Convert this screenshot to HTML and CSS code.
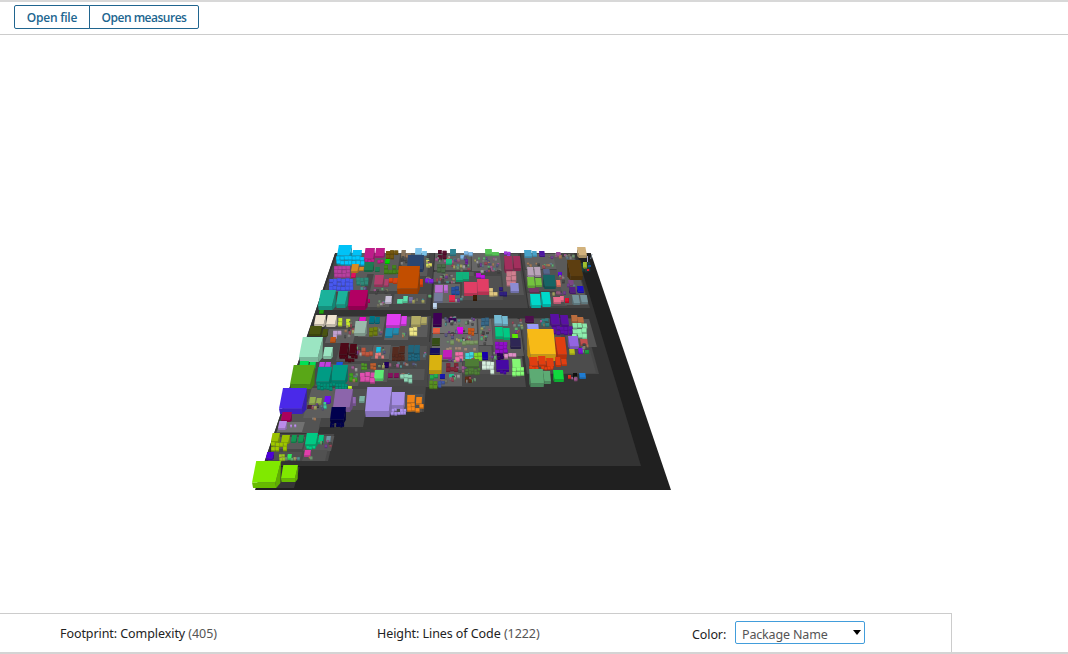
FILE: index.html
```html
<!DOCTYPE html>
<html lang="en">
<head>
<meta charset="utf-8">
<title>Code City</title>
<link rel="stylesheet" href="styles.css">
</head>
<body>
<div class="app">
  <header class="toolbar">
    <div class="button-group">
      <button class="button button-file">Open file</button>
      <button class="button button-measures">Open measures</button>
    </div>
  </header>
  <main class="stage">
    <svg class="city" id="city" viewBox="0 35 1068 578" aria-label="Code city"></svg>
  </main>
  <footer class="legend">
    <div class="metric metric-footprint">Footprint: Complexity <span class="count">(405)</span></div>
    <div class="metric metric-height">Height: Lines of Code <span class="count">(1222)</span></div>
    <div class="color-picker">
      <span class="color-label">Color:</span>
      <div class="select"><span>Package Name</span><svg class="arrow" viewBox="0 0 8 5"><path d="M0 0h8L4 5z"/></svg></div>
    </div>
  </footer>
</div>
<script src="city.js"></script>
</body>
</html>
```
FILE: styles.css
```css
* { box-sizing: border-box; }
body { margin: 0; background: #fff; font-family: "Noto Sans", "Open Sans", sans-serif; font-size: 12px; color: #222; }
.app { display: flex; flex-direction: column; height: 654px; overflow: hidden; }
.toolbar { height: 35px; flex: none; padding: 3px 14px 0; border-top: 2px solid #d8d8d8; border-bottom: 1px solid #ccc; }
.button-group { display: flex; }
.button { height: 24px; padding: 1px 0 0; border: 1px solid #20658f; background: #fff; color: #20658f; font-family: "Open Sans", sans-serif; font-size: 12px; font-weight: 600; line-height: 20px; white-space: nowrap; }
.button-file { width: 76px; border-radius: 2px 0 0 2px; letter-spacing: -0.25px; }
.button-measures { width: 110px; margin-left: -1px; border-radius: 0 2px 2px 0; letter-spacing: -0.5px; }
.stage { height: 578px; flex: none; }
.city { display: block; width: 1068px; height: 578px; }
.legend { display: flex; width: 952px; height: 40px; flex: none; border-top: 1px solid #ccc; border-right: 1px solid #ccc; padding-left: 60px; }
.app::after { content: ""; height: 2px; margin-top: -1px; flex: none; background: #d4d4d4; }
.metric { padding-top: 11px; font-size: 12.5px; line-height: 18px; white-space: nowrap; }
.metric-footprint { width: 317px; letter-spacing: -0.07px; }
.metric-height { width: 315px; letter-spacing: -0.07px; }
.count { color: #555; }
.color-picker { display: flex; align-items: flex-start; padding-top: 7px; }
.color-label { width: 43px; padding-top: 5px; font-size: 12.5px; line-height: 18px; letter-spacing: -0.1px; }
.select { display: flex; align-items: center; justify-content: space-between; width: 130px; height: 23px; padding: 4px 3px 0 6px; border: 1px solid #429ddb; border-radius: 2px; color: #555; font-size: 12.5px; letter-spacing: -0.16px; white-space: nowrap; }
.arrow { width: 8px; height: 5px; margin-bottom: 4px; fill: #000; }
```
FILE: city.js
```js
const NS = "http://www.w3.org/2000/svg";
const city = document.getElementById("city");
const VX = 463, VY = -125;
let seed = 11;
const rnd = () => (seed = (seed * 16807) % 2147483647) / 2147483647;

function poly(points, fill) {
  const p = document.createElementNS(NS, "polygon");
  p.setAttribute("points", points.map(q => q.map(n => n.toFixed(1)).join(",")).join(" "));
  p.setAttribute("fill", fill);
  city.appendChild(p);
}
function shade(hex, f) {
  const n = parseInt(hex, 16);
  return `rgb(${[n >> 16, (n >> 8) & 255, n & 255].map(v => Math.round(v * f)).join(",")})`;
}
// Ground plates: x positions are given on the near edge and recede to the vanishing point.
function plate(x1, x2, top, bottom, fill) {
  const t = (top - VY) / (bottom - VY);
  poly([[x1, bottom], [x2, bottom], [VX + (x2 - VX) * t, top], [VX + (x1 - VX) * t, top]], fill);
}
[
  [255, 671, 253, 490, "#202020"], [263, 641, 253, 466, "#333"],
  [256, 294, 467, 488, "#353535"],
  [318, 430, 253, 310, "#464646"], [432, 528, 253, 308, "#464646"], [529, 590, 253, 308, "#444"],
  [320, 429, 316, 343, "#484848"], [306, 427, 342, 387, "#484848"], [427, 526, 318, 387, "#484848"], [527, 599, 318, 374, "#464646"],
  [283, 424, 386, 412, "#464646"], [276, 318, 402, 433, "#535353"], [319, 363, 394, 427, "#464646"],
  [268, 328, 434, 461, "#484848"],
  [329, 363, 253, 292, "#5b5b5b"], [365, 397, 253, 274, "#5b5b5b"], [370, 400, 274, 291, "#5b5b5b"],
  [366, 389, 294, 307, "#5a5a5a"], [393, 426, 294, 304, "#555"], [400, 427, 253, 276, "#595959"],
  [434, 471, 253, 270, "#616161"], [472, 502, 253, 271, "#666"], [433, 474, 272, 282, "#5c5c5c"],
  [433, 460, 284, 303, "#646464"], [462, 503, 276, 300, "#515151"], [504, 524, 254, 295, "#555"],
  [526, 563, 254, 269, "#626262"], [528, 565, 270, 291, "#535353"], [529, 567, 293, 306, "#505050"], [565, 588, 257, 305, "#5a5a5a"],
  [331, 357, 317, 326, "#606060"], [358, 382, 317, 337, "#606060"], [384, 408, 317, 340, "#606060"], [409, 427, 317, 337, "#5b5b5b"],
  [325, 353, 329, 343, "#606060"], [336, 370, 345, 361, "#555"], [371, 389, 345, 359, "#606060"], [389, 426, 346, 360, "#535353"],
  [315, 358, 364, 386, "#575757"], [359, 387, 369, 382, "#585858"], [388, 424, 369, 380, "#555"],
  [432, 477, 319, 333, "#727272"], [431, 479, 334, 360, "#696969"], [479, 493, 319, 345, "#696969"], [480, 493, 346, 374, "#5b5b5b"],
  [494, 524, 319, 356, "#5a5a5a"], [494, 524, 358, 375, "#5b5b5b"], [429, 462, 362, 386, "#626262"], [463, 493, 362, 374, "#505050"],
  [528, 568, 319, 370, "#535353"], [568, 597, 319, 347, "#535353"], [527, 596, 350, 373, "#4c4c4c"],
  [303, 333, 388, 418, "#5d5d5d"], [277, 302, 422, 432, "#717171"], [334, 364, 389, 410, "#505050"], [382, 422, 394, 412, "#515151"],
  [272, 302, 437, 449, "#5a5a5a"], [303, 331, 436, 451, "#575757"], [268, 300, 452, 460, "#505050"], [302, 325, 450, 461, "#515151"]
].forEach(p => plate(...p));

const items = [];
const box = (c, x, y, w, h) => items.push([c, x, y, w, h]);
const B = `00c8ff 337,245,15,13 352,250,10,7
c41e8e 364,248,11,13 375,248,10,10
e09020 351,264,8,9 359,267,5,4
1d8055 364,262,10,10 375,267,5,5
00e000 385,259,5,5
2c4875 407,255,17,17
8c7860 401,250,5,8 406,253,5,5
80c8f0 415,248,7,8 422,251,5,5
c85000 397,266,23,28
e04510 389,278,4,5 393,278,5,6 420,279,3,8
b84070 374,275,10,12 384,279,5,8
1cb8a0 318,290,18,20 336,291,12,17
b80066 348,290,20,20 368,299,2,4
d0c8e0 385,296,7,8
60e8b0 397,299,6,5 403,296,5,7
7870a0 409,297,4,6
e81060 351,273,5,5
308898 450,249,6,7
58c858 485,249,7,7 492,252,7,4
18c888 446,259,6,6
10b880 456,272,7,10 463,272,6,9
c010e0 476,273,5,5 481,275,4,4
c070d8 435,285,8,9 444,285,4,8
7880a0 434,293,9,10
e84068 464,282,13,14 477,279,12,16
f02850 449,295,6,7
402008 473,295,4,6
9090d8 510,283,9,10
a83060 504,256,9,17 513,256,8,15
c0d8f0 433,303,4,6
48a8d0 524,250,8,8 532,251,5,6
5018a8 539,251,6,6
a048a0 556,252,5,5
d8b880 577,247,10,11
604010 567,260,16,20
c0a8c0 527,267,7,10 534,267,7,10
78c840 527,277,8,11 535,278,7,9
186868 543,275,13,14
586890 543,269,7,6
6010e0 558,272,4,4
f07868 556,280,5,7
783868 529,288,10,5
00e0d0 530,294,11,14 541,292,10,15
f07090 553,297,8,7 560,296,4,6
e01030 565,298,4,5
7898a0 572,295,8,10 580,295,8,9
582088 569,287,7,7
2010d0 577,286,7,7
804888 568,280,6,6
a0c030 583,262,4,7
f8ecd8 314,315,12,12 326,315,11,12
4c5810 309,326,13,10 322,329,6,8
f010d0 359,317,7,6
007888 369,316,6,8 375,317,5,7
e840f8 386,314,15,14 401,316,6,10
b8b068 411,316,10,11 421,317,6,8
a0c0b0 354,321,13,15
2090b8 385,328,8,10 393,328,6,7
c85818 330,337,6,6
a0ecc8 299,337,24,25 323,347,10,12
500818 339,343,10,14 349,344,8,12
10c8e8 376,347,5,6
582c20 392,347,7,10 399,346,6,8
206880 408,345,6,9 414,345,6,10
00e858 299,361,10,8 309,362,7,7
c840e8 319,362,6,6 325,362,6,6
5cac18 290,365,25,24
00a088 316,367,16,18 331,365,17,19
1858e8 336,362,7,5
60f078 374,370,10,11
881060 388,373,5,5 394,373,5,5
200060 384,362,5,6
c0f030 348,386,4,3
400058 433,313,9,14
f06040 433,328,7,6
e800f8 457,327,6,7
78c0d8 494,315,8,11 502,316,6,10
00d088 495,327,8,12 503,328,7,12
302858 510,338,11,11
60f000 512,334,6,5
385018 432,338,8,8
181060 430,348,10,7
e0b810 429,355,13,19
c820c0 443,350,9,9
1800b0 482,352,6,8
508038 465,359,14,9
4808a8 496,360,13,12
88ff78 512,359,9,11
20c890 449,374,5,5
1818b0 440,374,5,5
500f50 525,316,9,7
a0a0ff 527,324,12,10
5c10a8 550,314,10,13 560,315,9,12
c07040 571,315,7,8 577,317,7,7
ffc018 527,329,29,32
e84010 555,337,12,22 529,357,9,11 538,356,8,11 546,358,8,10 555,357,6,10 561,359,6,7
9868e8 568,336,11,13
c85050 580,339,8,7
c0c818 569,349,6,6
8010e0 578,348,5,6
20a040 585,350,4,4
60b078 529,369,15,18 543,371,8,13
10e040 553,370,11,12
101010 573,373,4,5
e03020 568,375,3,4
2080d8 579,373,7,6
4c2af0 279,388,28,26
b00060 281,412,11,10
c090f0 278,421,9,9
98b050 309,397,7,8 316,398,6,7
7010f8 324,396,7,8
9068b0 333,389,20,23 352,397,4,9
000050 330,407,16,16
80b8a8 359,396,6,7
ac92ee 365,387,27,30 391,392,14,17
f88818 407,395,8,9 416,397,6,8
a0c800 271,433,9,10 281,435,9,9
10a058 291,435,6,8 298,435,6,8
00d088 305,433,13,14 318,435,6,9
7898a8 326,436,5,6
5000e0 266,452,8,8
30f060 287,454,5,6
e840b0 304,450,7,7
84f000 252,461,29,27 281,465,17,17
502038 307,405,5,4
20a810 319,310,5,4`;
B.split("\n").forEach(line => {
  const [c, ...r] = line.split(" ");
  r.forEach(s => box(c, ...s.split(",").map(Number)));
});

// Packages holding many small classes: colour, x, y, width, height, building size, fill ratio.
[
  ["00c8ff", 336, 256, 26, 9, 4, 1], ["c41e8e", 365, 259, 17, 4, 3, .8], ["b840a0", 334, 265, 17, 12, 4, 1],
  ["74580f", 386, 250, 13, 8, 4, .8], ["45851e", 384, 265, 14, 9, 4, .9], ["4858f0", 329, 278, 25, 12, 4, 1],
  ["308878", 356, 277, 11, 7, 4, .8], ["e0e060", 426, 260, 6, 5, 3, .7], ["8020e0", 425, 278, 6, 5, 4, .8],
  ["581030", 438, 250, 9, 7, 4, 1], ["80b8e8", 460, 251, 11, 7, 4, .7], ["4c6a48", 437, 264, 9, 8, 4, .9],
  ["7028a0", 462, 259, 8, 6, 3, .6], ["2850a0", 451, 286, 7, 8, 4, .8], ["e0c880", 489, 287, 7, 6, 4, .8],
  ["302080", 499, 287, 8, 7, 4, .8], ["d08090", 506, 271, 11, 12, 5, .9], ["a038e0", 504, 251, 7, 5, 3, .8],
  ["c8e830", 338, 318, 10, 8, 4, .8], ["c0a0d0", 333, 330, 8, 6, 4, .8], ["708010", 369, 327, 7, 6, 4, .7],
  ["f0e888", 409, 327, 9, 8, 4, .9], ["c05840", 361, 347, 10, 9, 4, .8], ["e08080", 375, 352, 8, 6, 3, .8],
  ["500818", 339, 355, 17, 5, 3, .8], ["582c20", 392, 354, 13, 6, 3, .9], ["206880", 408, 354, 11, 5, 3, .8],
  ["009078", 317, 383, 30, 5, 3, .9], ["e050b0", 360, 372, 12, 9, 5, .8], ["509828", 361, 363, 7, 6, 3, .8],
  ["c06030", 370, 363, 6, 6, 3, .8], ["40a020", 349, 373, 8, 8, 4, .8], ["90d8b8", 400, 374, 10, 6, 4, .6],
  ["380858", 448, 318, 8, 5, 4, .9], ["386888", 481, 317, 7, 7, 4, .9], ["d05818", 468, 328, 6, 5, 3, .9],
  ["7c9a64", 442, 340, 36, 5, 4, .5], ["a08878", 443, 347, 35, 4, 3, .4], ["9010c8", 495, 341, 13, 11, 4, .95],
  ["f070a8", 455, 352, 8, 8, 4, .9], ["40d8e0", 465, 352, 6, 7, 4, .9], ["80d828", 474, 352, 6, 6, 4, .8],
  ["802838", 446, 363, 10, 8, 4, .75], ["508038", 465, 368, 14, 6, 3, .9], ["d8f0e0", 482, 361, 10, 12, 4, .85],
  ["4808a8", 497, 370, 10, 4, 3, .9], ["88ff78", 512, 367, 12, 6, 4, .9], ["300060", 497, 353, 6, 5, 3, .7],
  ["e090c8", 504, 353, 16, 5, 4, .5], ["603018", 465, 376, 5, 5, 3, .9], ["589020", 429, 380, 9, 6, 4, .7],
  ["4058a8", 438, 381, 6, 5, 3, .7], ["20b050", 430, 374, 7, 5, 4, .8], ["308080", 541, 318, 8, 6, 4, .8],
  ["5c10a8", 552, 326, 18, 6, 4, .9], ["90f0b0", 572, 323, 13, 13, 5, 1], ["e84010", 529, 366, 23, 4, 3, .9],
  ["ac92ee", 391, 408, 14, 6, 3, .8], ["f88818", 407, 403, 14, 8, 4, .8], ["000050", 330, 422, 15, 4, 2, .9],
  ["a0c800", 271, 442, 16, 8, 4, .85], ["00d088", 306, 446, 13, 4, 3, .8], ["9cc820", 279, 454, 6, 6, 3, .8],
  ["c090f0", 290, 424, 7, 3, 2, .8], ["40c8a0", 323, 402, 5, 5, 3, .7], ["204040", 581, 262, 8, 8, 3, .8]
].forEach(([c, x, y, w, h, s, fill]) => {
  for (let j = 0; j < h - 1; j += s)
    for (let i = 0; i < w - 1; i += s)
      if (rnd() < fill) box(c, x + i + rnd() * .6, y + j + rnd() * 1.2, s - .4 + rnd() * .7, s + rnd() * .8);
});

// Mixed neighbourhoods of tiny classes.
const mix = "707060 709070 906078 585880 a0a0a0 a07858 60a870 704090 984858 607888 a0a060 a05890 505050 509090 808080 484848".split(" ");
[
  [357, 281, 10, 12], [373, 288, 18, 5], [376, 298, 12, 9], [409, 298, 17, 5], [399, 255, 10, 9], [426, 253, 5, 45],
  [434, 256, 32, 7], [448, 264, 22, 7], [435, 273, 20, 11], [473, 257, 27, 12], [474, 268, 27, 5], [453, 295, 12, 6],
  [526, 262, 28, 6], [558, 274, 8, 8], [546, 252, 15, 7], [562, 253, 14, 6], [552, 290, 14, 5], [567, 282, 13, 5],
  [343, 321, 13, 16], [376, 326, 8, 9], [398, 331, 9, 6], [355, 345, 8, 12], [382, 347, 7, 6], [423, 350, 4, 8],
  [347, 364, 10, 6], [376, 362, 11, 6], [388, 362, 31, 6], [349, 373, 10, 8], [400, 373, 13, 6],
  [444, 316, 33, 10], [444, 328, 22, 8], [442, 335, 37, 8], [480, 325, 12, 21], [445, 357, 30, 5],
  [456, 365, 10, 8], [440, 374, 21, 9], [465, 376, 12, 6], [511, 319, 12, 14], [489, 350, 7, 8],
  [540, 316, 9, 10], [567, 374, 10, 6], [581, 340, 8, 12], [309, 403, 17, 7], [310, 415, 6, 5],
  [280, 456, 20, 4], [320, 440, 12, 7], [306, 456, 7, 3]
].forEach(([x, y, w, h]) => {
  for (let n = 0; n < w * h / 15; n++)
    box(mix[Math.floor(rnd() * mix.length)], x + rnd() * (w - 2), y + rnd() * (h - 2), 1.6 + rnd() * 1.5, 2 + rnd() * 1.8);
});

items.sort((a, b) => (a[2] + a[4]) - (b[2] + b[4]));
items.forEach(([c, x, y, w, h]) => {
  if (w < 5) {
    poly([[x, y], [x + w, y], [x + w, y + h], [x, y + h]], shade(c, .78));
    poly([[x, y], [x + w * .9, y], [x + w * .9, y + h * .7], [x, y + h * .7]], shade(c, 1));
    return;
  }
  const yt = y + h * .8, k = (VX - x - w / 2) / (y - VY);
  const d = Math.min(Math.abs(k) * h * .62, w * .25), lean = d * .75;
  const m = k > 0 ? v => x + v : v => x + w - v;
  poly([[m(w), y], [m(w - d), yt], [m(w - d * .85), y + h], [m(w - d * .1), y + h * .82]], shade(c, .72));
  poly([[m(0), yt], [m(w - d), yt], [m(w - d * .85), y + h], [m(d * .2), y + h]], shade(c, .78));
  poly([[m(lean), y], [m(w), y], [m(w - d), yt], [m(0), yt]], shade(c, .97));
});
poly([[590, 259], [591, 259], [592.5, 254], [592, 254]], "#789");
poly([[587, 262], [588, 262], [588, 256], [587, 256]], "#aac");
poly([[587, 269], [589, 269], [589, 271], [587, 271]], "#f01020");
poly([[588, 265], [591, 265], [591, 267], [588, 267]], "#1050a0");
```
